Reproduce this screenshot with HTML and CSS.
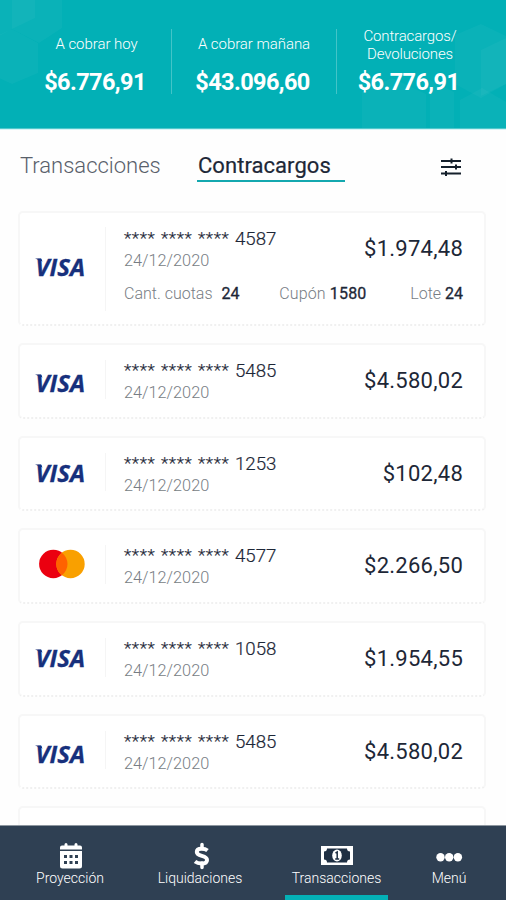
FILE: index.html
```html
<!DOCTYPE html>
<html lang="es">
<head>
<meta charset="utf-8">
<title>Contracargos</title>
<link rel="stylesheet" href="styles.css">
</head>
<body>
<div class="app">
  <header class="summary">
    <svg class="pattern" width="506" height="128" viewBox="0 0 506 128">
      <g fill="#fff" fill-opacity=".035">
        <path d="M-12-12 24-30 62-8v36L39 43 12 29-12 42z"/>
        <path d="M-18 43 12 29 38 43v30L12 84-18 70z"/>
        <path d="M12-12h23v30L12 29z"/>
        <path d="M455 35 481 24l25 12v48l-25 14-26-14z"/>
        <path d="M481 50l25-12v46l-25 12z"/>
        <path d="M362 92l30-14 34 16v34h-64zM430 80l24 12v36h-24zM460 100l22-12 24 14v26h-46z"/>
      </g>
    </svg>
    <div class="stat"><div class="stat-label"><span>A cobrar hoy</span></div><div class="stat-value">$6.776,91</div></div>
    <div class="stat"><div class="stat-label"><span>A cobrar mañana</span></div><div class="stat-value">$43.096,60</div></div>
    <div class="stat"><div class="stat-label tight"><span>Contracargos/<br>Devoluciones</span></div><div class="stat-value">$6.776,91</div></div>
  </header>
  <div class="tabs">
    <div class="tab">Transacciones</div>
    <div class="tab active">Contracargos</div>
    <svg class="filter" width="22" height="20" viewBox="0 0 22 20" stroke="#15202c" stroke-width="2">
      <path d="M1 4h20M1 10h20M1 16.500h20M11.500 1.500v5M16 7.500v5M6 14v5"/>
    </svg>
  </div>
  <main class="list">
    <article class="card first">
      <div class="brand"><svg width="54" height="28"><text class="visa-text" x="1.500" y="20.500" textLength="49.500" lengthAdjust="spacingAndGlyphs">VISA</text><path d="M1 3.500h6l1.500 3z" fill="#17307c"/></svg></div>
      <div class="body">
        <div class="row"><div><div class="number"><span class="mask">****</span><span class="mask">****</span><span class="mask">****</span>4587</div><div class="date">24/12/2020</div></div><div class="amount">$1.974,48</div></div>
        <div class="details"><span>Cant. cuotas <b class="wide">24</b></span><span class="coupon">Cupón <b>1580</b></span><span>Lote <b>24</b></span></div>
      </div>
    </article>
    <article class="card">
      <div class="brand"><svg width="54" height="28"><text class="visa-text" x="1.500" y="20.500" textLength="49.500" lengthAdjust="spacingAndGlyphs">VISA</text><path d="M1 3.500h6l1.500 3z" fill="#17307c"/></svg></div>
      <div class="body"><div class="row"><div><div class="number"><span class="mask">****</span><span class="mask">****</span><span class="mask">****</span>5485</div><div class="date">24/12/2020</div></div><div class="amount">$4.580,02</div></div></div>
    </article>
    <article class="card">
      <div class="brand raised"><svg width="54" height="28"><text class="visa-text" x="1.500" y="20.500" textLength="49.500" lengthAdjust="spacingAndGlyphs">VISA</text><path d="M1 3.500h6l1.500 3z" fill="#17307c"/></svg></div>
      <div class="body"><div class="row"><div><div class="number"><span class="mask">****</span><span class="mask">****</span><span class="mask">****</span>1253</div><div class="date">24/12/2020</div></div><div class="amount">$102,48</div></div></div>
    </article>
    <article class="card">
      <div class="brand mc"><svg width="48" height="30" viewBox="0 0 48 30"><circle cx="16.300" cy="15" r="14.200" fill="#eb0010"/><circle cx="33.500" cy="15" r="14.200" fill="#f9a000"/><path d="M24.900 3.700a14.200 14.200 0 0 1 0 22.600a14.200 14.200 0 0 1 0-22.600z" fill="#ff6200"/></svg></div>
      <div class="body"><div class="row"><div><div class="number"><span class="mask">****</span><span class="mask">****</span><span class="mask">****</span>4577</div><div class="date">24/12/2020</div></div><div class="amount">$2.266,50</div></div></div>
    </article>
    <article class="card">
      <div class="brand raised"><svg width="54" height="28"><text class="visa-text" x="1.500" y="20.500" textLength="49.500" lengthAdjust="spacingAndGlyphs">VISA</text><path d="M1 3.500h6l1.500 3z" fill="#17307c"/></svg></div>
      <div class="body"><div class="row"><div><div class="number"><span class="mask">****</span><span class="mask">****</span><span class="mask">****</span>1058</div><div class="date">24/12/2020</div></div><div class="amount">$1.954,55</div></div></div>
    </article>
    <article class="card">
      <div class="brand"><svg width="54" height="28"><text class="visa-text" x="1.500" y="20.500" textLength="49.500" lengthAdjust="spacingAndGlyphs">VISA</text><path d="M1 3.500h6l1.500 3z" fill="#17307c"/></svg></div>
      <div class="body"><div class="row"><div><div class="number"><span class="mask">****</span><span class="mask">****</span><span class="mask">****</span>5485</div><div class="date">24/12/2020</div></div><div class="amount">$4.580,02</div></div></div>
    </article>
    <article class="card"></article>
  </main>
  <nav class="nav">
    <div class="nav-item">
      <svg width="26" height="28" viewBox="0 0 26 28"><path fill="#fff" d="M4 3.500h2.500V2.500a1.500 1.500 0 0 1 3 0v1h7v-1a1.500 1.500 0 0 1 3 0v1H22a2 2 0 0 1 2 2v2H2v-2a2 2 0 0 1 2-2zM2 9h22v15a2.500 2.500 0 0 1-2.500 2.500h-17A2.500 2.500 0 0 1 2 24z"/><path d="M6 13h3v3H6zm5.500 0h3v3h-3zm5.500 0h3v3h-3zM6 19h3v3H6zm5.500 0h3v3h-3zm5.500 0h3v3h-3z" fill="#2f4053"/></svg>
      <span>Proyección</span>
    </div>
    <div class="nav-item">
      <svg class="dollar" width="20" height="28" viewBox="0 0 20 28" fill="none" stroke="#fff" stroke-width="4"><path d="M16.500 8.500C15 7.300 12.500 6.800 10.500 6.800 7.500 6.800 5.800 8.200 5.800 10c0 5 10.200 2.800 10.200 8 0 2.200-2.200 3.500-5.500 3.500-2.500 0-4.800-.7-6.500-2"/><path stroke-width="3.500" stroke-linecap="round" d="M11 2.500v4M11 21v4.500"/></svg>
      <span>Liquidaciones</span>
    </div>
    <div class="nav-item active">
      <svg width="32" height="28" viewBox="0 0 32 28"><path fill="#fff" d="M0 4h32v19H0z"/><path fill="#1e2f43" d="M6 6.500h20a3 3 0 0 0 3 3v8a3 3 0 0 0-3 3H6a3 3 0 0 0-3-3v-8a3 3 0 0 0 3-3z"/><ellipse cx="16" cy="13.500" rx="4.800" ry="6" fill="#fff"/><path d="M14.500 11 16.200 10v7M14.200 17h4" fill="none" stroke="#1e2f43" stroke-width="1.500"/></svg>
      <span>Transacciones</span>
    </div>
    <div class="nav-item">
      <svg width="28" height="28" viewBox="0 0 28 28" fill="#fff"><circle cx="5.500" cy="15.300" r="4.200"/><circle cx="14.200" cy="15.300" r="4.200"/><circle cx="22.900" cy="15.300" r="4.200"/></svg>
      <span>Menú</span>
    </div>
  </nav>
</div>
</body>
</html>
```
FILE: styles.css
```css
* { box-sizing: border-box; }
body { margin: 0; background: #fefefe; font-family: Roboto, sans-serif; color: #1d2737; }
.app { width: 506px; height: 900px; display: flex; flex-direction: column; overflow: hidden; white-space: nowrap; }

.summary { position: relative; flex: none; height: 130px; padding: 29px 23px 0 22px; display: grid; grid-template-columns: 150px 165px 146px; background: #02b0b6; border-bottom: 1px solid #d5f4f6; box-shadow: inset 0 -1px #4fc8cc; color: #fff; text-align: center; }
.pattern { position: absolute; left: 0; top: 0; }
.stat { position: relative; height: 65px; border-right: 1px solid #43c4c8; }
.stat:last-child { border-right: 0; }
.stat-label { height: 36px; padding-top: 6px; font-size: 15px; line-height: 18px; font-weight: 300; letter-spacing: -.05px; }
.stat-label.tight { padding-top: 0; margin-top: -2px; margin-bottom: 2px; letter-spacing: -.15px; }
.stat-value { padding: 1px 3px 0 0; font-size: 23.500px; line-height: 33px; font-weight: 700; letter-spacing: -.6px; }

.tabs { flex: none; height: 81px; padding: 20px 44px 0 20px; display: flex; align-items: flex-start; }
.tab { width: 177px; height: 32px; font-size: 22px; line-height: 31px; font-weight: 300; letter-spacing: 0; color: #59606a; }
.tab.active { width: 148px; padding-left: 1px; border-bottom: 2px solid #14a8af; font-weight: 400; letter-spacing: .05px; color: #1d2737; -webkit-text-stroke: .2px #1d2737; }
.filter { margin: 7px 0 0 auto; }

.list { flex: 1; min-height: 0; padding: 0 20px 0 18px; display: flex; flex-direction: column; gap: 17px; overflow: hidden; }
.card { flex: none; height: 75.700px; display: flex; border: 2px solid #f7f7f7; border-bottom: 2px dotted #f0f0f0; border-radius: 5px; background: #fff; }
.card.first { height: 115px; }
.brand { width: 86px; margin: 15px 0 18px; padding: 11px 0 0 14px; border-right: 1px solid #f5f5f5; }
.brand.raised { padding-top: 8px; }
.first .brand { margin: 14px 0 13px; padding-top: 28px; }
.brand.mc { padding: 4px 0 0 17px; }
.brand svg { display: block; overflow: visible; }
.visa-text { font: italic 700 23.500px "Open Sans", sans-serif; fill: #17307c; stroke: #17307c; stroke-width: .3px; }
.body { flex: 1; padding: 14px 21px 0 18px; }
.row { display: flex; justify-content: space-between; }
.number { display: flex; font-size: 18.700px; line-height: 24px; font-weight: 300; color: #1d2737; -webkit-text-stroke: .2px; }
.mask { width: 37px; height: 24px; padding-top: 1px; font-size: 17px; line-height: 20px; letter-spacing: .6px; font-weight: 300; }
.date { font-size: 16.300px; line-height: 20px; font-weight: 300; color: #777d84; }
.first .date { line-height: 19px; }
.amount { padding-top: 7px; font-size: 22px; line-height: 30px; letter-spacing: .25px; }
.details { display: flex; justify-content: space-between; margin-top: 14px; font-size: 16px; line-height: 20px; font-weight: 300; color: #777d84; }
.details b { font-weight: 400; color: #1d2737; -webkit-text-stroke: .3px; }
.details .wide { margin-left: 5px; }
.details .coupon { margin-right: 4px; letter-spacing: .15px; }

.nav { flex: none; height: 75px; display: grid; grid-template-columns: 140px 120px 152px 74px; background: #2f4053; border-top: 1px solid #8d969f; color: #fff; }
.nav-item { display: flex; flex-direction: column; align-items: center; padding-top: 16px; font-size: 14px; line-height: 16px; font-weight: 300; }
.nav-item svg { display: block; }
.nav-item:first-child svg { margin-left: 2px; }
.nav-item .dollar { margin-left: 2px; }
.nav-item.active { width: 103px; margin-left: 25px; border-bottom: 5px solid #04b0b6; }
```
